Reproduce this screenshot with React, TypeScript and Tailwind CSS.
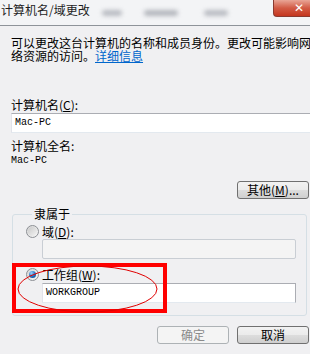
import React from "react"

function Radio({ checked }: { checked?: boolean }) {
  return (
    <span className="flex h-[13px] w-[13px] items-center justify-center rounded-full border border-[#8c8f94] bg-gradient-to-br from-[#d6d6d6] to-[#f7f7f7]">
      {checked ? (
        <span className="h-[7px] w-[7px] rounded-full bg-[radial-gradient(circle_at_35%_30%,#9fd4ff,#1a6cc0_55%,#0b3f7c)]" />
      ) : (
        <span className="h-[9px] w-[9px] rounded-full bg-gradient-to-br from-[#c9c9c9] to-[#f4f4f4]" />
      )}
    </span>
  )
}

function Btn({ children, disabled }: { children: React.ReactNode; disabled?: boolean }) {
  return (
    <div
      className={
        disabled
          ? "flex h-[18px] w-[72px] items-center justify-center rounded-[3px] border border-[#adb2b5] bg-[#f4f4f4] text-[#8a8a8a]"
          : "flex h-[18px] w-[72px] items-center justify-center rounded-[3px] border border-[#707070] bg-[linear-gradient(#f2f2f2,#ebebeb_50%,#dddddd_50%,#cfcfcf)] text-black"
      }
    >
      {children}
    </div>
  )
}

const mono = "font-['Liberation_Mono',monospace] text-[10px] leading-[12px]"

export default function App() {
  return (
    <div className="h-[354px] w-[310px] overflow-hidden bg-[#f0f0f2] font-['Noto_Sans_CJK_SC',sans-serif] text-[12px] leading-[12px] text-black">
      {/* title bar */}
      <div className="flex h-[26px] border-b border-[#8e9399] bg-[#f3f4f6]">
        <div className="pl-[1px] pt-[4px] whitespace-nowrap text-[#1e1e1e]">计算机名/域更改</div>
        <span className="ml-[12px] mt-[10px] h-[6px] w-[20px] rounded-full bg-[#b9bcc2] blur-[2px]" />
        <span className="ml-[22px] mt-[10px] h-[6px] w-[34px] rounded-full bg-[#b4b7bd] blur-[2px]" />
        <span className="ml-[26px] mt-[10px] h-[6px] w-[24px] rounded-full bg-[#b9bcc2] blur-[2px]" />
        <div className="ml-auto flex h-[17px] w-[37px] items-center justify-end rounded-bl-[4px] border border-t-0 border-r-0 border-[#8a3a30] bg-[linear-gradient(#e9a596,#d25b45_50%,#c4361f)] pr-[6px]">
          <span className="font-['DejaVu_Sans',sans-serif] text-[12px] font-bold leading-[12px] text-white">✕</span>
        </div>
      </div>

      <div className="pl-[11px] pr-[1px]">
        <div className="mt-[10px] whitespace-nowrap leading-[13px]">
          <div>可以更改这台计算机的名称和成员身份。更改可能影响网</div>
          <div>
            络资源的访问。<span className="text-[#0066cc] underline">详细信息</span>
          </div>
        </div>

        <div className="mt-[37px]">
          计算机名(<span className="underline">C</span>):
        </div>
        <div className={`mt-[2px] flex h-[20px] w-[310px] items-center border border-[#abadb3] border-b-[#e3e9ef] border-l-[#e2e3ea] bg-white pl-[3px] ${mono}`}>
          Mac-PC
        </div>

        <div className="mt-[7px]">计算机全名:</div>
        <div className={`mt-[3px] ${mono}`}>Mac-PC</div>

        <div className="mt-[14px] flex justify-end">
          <Btn>
            其他(<span className="underline">M</span>)...
          </Btn>
        </div>

        <fieldset className="mt-[9px] ml-[1px] w-[295px] rounded-[3px] border border-[#d5dfe5] pb-[12px] pl-[13px]">
          <legend className="ml-[6px] px-[2px]">隶属于</legend>
          <div className="mt-[5px] flex h-[13px] items-center gap-[3px]">
            <Radio />
            <span>
              域(<span className="underline">D</span>):
            </span>
          </div>
          <div className="ml-[16px] mt-[1px] h-[20px] w-[254px] rounded-[2px] border border-[#c9ced4] bg-[#f4f4f4]" />

          <div className="relative mt-[9px]">
            <div className="flex h-[13px] items-center gap-[3px]">
              <Radio checked />
              <span>
                工作组(<span className="underline">W</span>):
              </span>
            </div>
            <div className={`ml-[16px] mt-[2px] flex h-[20px] w-[254px] items-center border border-[#abadb3] border-b-[#e3e9ef] border-l-[#e2e3ea] bg-white pl-[3px] ${mono}`}>
              WORKGROUP
            </div>
            <div className="absolute left-[-14px] top-[-5px] h-[50px] w-[155px] border-[4px] border-[#ff0000]" />
            <svg className="absolute left-[-9px] top-[-3px]" width="141" height="48" viewBox="0 0 141 48">
              <ellipse cx="70.5" cy="24" rx="69.5" ry="23" fill="none" stroke="#e00000" strokeWidth="1" />
            </svg>
          </div>
        </fieldset>

        <div className="mt-[10px] flex justify-end gap-[8px]">
          <Btn disabled>确定</Btn>
          <Btn>取消</Btn>
        </div>
      </div>
    </div>
  )
}
